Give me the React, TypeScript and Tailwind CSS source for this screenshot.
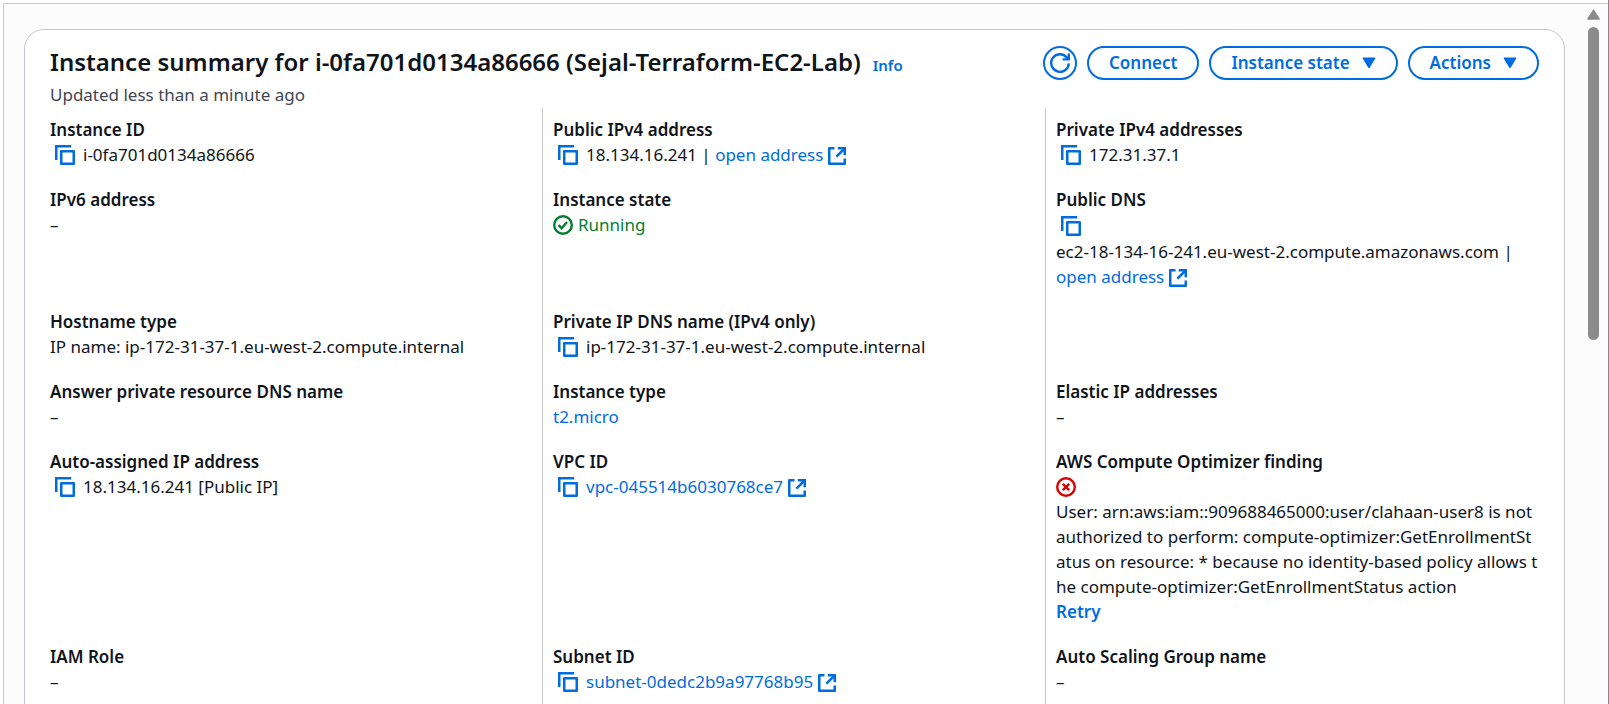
import type { ReactNode } from "react";

const link = "text-[#006ce0] hover:underline";

function CopyButton({ value }: { value: string }) {
  return (
    <button type="button" aria-label={`Copy ${value}`} className="ml-[5px] mr-2 inline-flex align-middle text-[#006ce0]">
      <svg width="20" height="20" viewBox="0 0 20 20" fill="none" stroke="currentColor" strokeWidth="2.5">
        <path d="M1.25 15V1.25H16.2" />
        <path d="M6.25 6.25h12.5v12.5H6.25z" strokeLinejoin="round" />
      </svg>
    </button>
  );
}

function ExternalIcon() {
  return (
    <svg aria-hidden="true" className="ml-[5px] inline-block align-middle" width="18" height="18" viewBox="0 0 18 18" fill="none" stroke="currentColor" strokeWidth="2.5">
      <path d="M6.5 1.25H1.25v15.5h15.5v-5.2" strokeLinejoin="round" />
      <path d="M9.8 1.25h6.95v6.9" />
      <path d="M16.4 1.6L8.4 9.6" />
    </svg>
  );
}

function ExternalLink({ children }: { children: ReactNode }) {
  return (
    <a href="#" className={link}>
      {children}
      <ExternalIcon />
    </a>
  );
}

function CheckCircle() {
  return (
    <svg aria-hidden="true" className="mr-[5px] inline-block align-middle" width="20" height="20" viewBox="0 0 20 20" fill="none" stroke="currentColor" strokeWidth="2.4">
      <circle cx="10" cy="10" r="8.8" />
      <path d="M5.6 10.2l3 3 5.4-6.2" />
    </svg>
  );
}

function ErrorCircle() {
  return (
    <svg aria-label="Error" className="block text-[#db0000]" width="20" height="20" viewBox="0 0 20 20" fill="none" stroke="currentColor" strokeWidth="2.4">
      <circle cx="10" cy="10" r="8.8" />
      <path d="M6.8 6.8l6.4 6.4M13.2 6.8l-6.4 6.4" />
    </svg>
  );
}

function Caret() {
  return (
    <svg aria-hidden="true" width="14" height="12" viewBox="0 0 14 12">
      <path d="M1.4 1.2h11.2L7 10.4z" fill="currentColor" stroke="currentColor" strokeWidth="1.6" strokeLinejoin="round" />
    </svg>
  );
}

function PillButton({ children, menu }: { children: ReactNode; menu?: boolean }) {
  return (
    <button
      type="button"
      aria-haspopup={menu ? "menu" : undefined}
      className="flex h-[34px] items-center gap-3 rounded-full border-2 border-[#006ce0] px-5 pb-px text-[17px] leading-[25px] font-semibold whitespace-nowrap text-[#006ce0]"
    >
      {children}
      {menu && <Caret />}
    </button>
  );
}

function Field({ label, children }: { label: string; children: ReactNode }) {
  return (
    <div className="border-l border-[#c6c6cd] pb-5 pl-[10px] nth-[3n+1]:border-transparent">
      <dt className="font-semibold">{label}</dt>
      <dd>{children}</dd>
    </div>
  );
}

const lineBox = "flex h-[25px] items-center whitespace-nowrap";

export default function App() {
  return (
    <div className="flex h-screen flex-col overflow-hidden border-r border-[#85858a] bg-white pt-[3px] pl-[3px] font-['Noto_Sans',sans-serif] text-[17px] leading-[25px] text-[#0f141a]">
      <div className="flex min-h-0 flex-1 border-t border-l border-[#c6c6cd] bg-[#fcfcfd]">
        <main className="min-w-0 flex-1 pt-[25px] pr-[21px] pl-5">
          <section className="rounded-[20px] border border-[#c6c6cd] bg-white pb-10">
            <header className="flex items-start justify-between px-[25px] pt-4">
              <div>
                <div className="flex items-baseline gap-3">
                  <h1 className="text-[24px] leading-8 font-semibold">
                    Instance summary for i-0fa701d0134a86666 (Sejal-Terraform-EC2-Lab)
                  </h1>
                  <a href="#" className="text-[15px] leading-5 font-semibold text-[#006ce0]">
                    Info
                  </a>
                </div>
                <p className="mt-1 text-[#424650]">Updated less than a minute ago</p>
              </div>
              <div className="flex gap-[10px]">
                <button
                  type="button"
                  aria-label="Refresh"
                  className="flex size-[34px] items-center justify-center rounded-full border-2 border-[#006ce0] text-[#006ce0]"
                >
                  <svg width="20" height="20" viewBox="0 0 20 20" fill="none" stroke="currentColor" strokeWidth="2.4">
                    <path d="M18.8 10.4A8.8 8.8 0 1 1 16.6 4.2L18.6 6.2" />
                    <path d="M18.8 0.4v6H12.6" />
                  </svg>
                </button>
                <PillButton>Connect</PillButton>
                <PillButton menu>Instance state</PillButton>
                <PillButton menu>Actions</PillButton>
              </div>
            </header>

            <dl className="mt-px mr-4 ml-[14px] grid grid-cols-3">
              <div className="h-[9px]" />
              <div className="h-[9px] border-l border-[#c6c6cd]" />
              <div className="h-[9px] border-l border-[#c6c6cd]" />

              <Field label="Instance ID">
                <div className={lineBox}>
                  <CopyButton value="instance ID" />
                  i-0fa701d0134a86666
                </div>
              </Field>
              <Field label="Public IPv4 address">
                <div className={lineBox}>
                  <CopyButton value="public IPv4 address" />
                  <span>
                    18.134.16.241 | <ExternalLink>open address</ExternalLink>
                  </span>
                </div>
              </Field>
              <Field label="Private IPv4 addresses">
                <div className={lineBox}>
                  <CopyButton value="private IPv4 address" />
                  172.31.37.1
                </div>
              </Field>

              <Field label="IPv6 address">–</Field>
              <Field label="Instance state">
                <div className={`${lineBox} text-[#00802f]`}>
                  <CheckCircle />
                  Running
                </div>
              </Field>
              <Field label="Public DNS">
                <div className="flex h-[27px] items-center">
                  <CopyButton value="public DNS" />
                </div>
                <div className={lineBox}>ec2-18-134-16-241.eu-west-2.compute.amazonaws.com |</div>
                <div className={lineBox}>
                  <ExternalLink>open address</ExternalLink>
                </div>
              </Field>

              <Field label="Hostname type">IP name: ip-172-31-37-1.eu-west-2.compute.internal</Field>
              <Field label="Private IP DNS name (IPv4 only)">
                <div className={lineBox}>
                  <CopyButton value="private IP DNS name" />
                  ip-172-31-37-1.eu-west-2.compute.internal
                </div>
              </Field>
              <div className="border-l border-[#c6c6cd]" />

              <Field label="Answer private resource DNS name">–</Field>
              <Field label="Instance type">
                <a href="#" className={link}>
                  t2.micro
                </a>
              </Field>
              <Field label="Elastic IP addresses">–</Field>

              <Field label="Auto-assigned IP address">
                <div className={lineBox}>
                  <CopyButton value="auto-assigned IP address" />
                  18.134.16.241 [Public IP]
                </div>
              </Field>
              <Field label="VPC ID">
                <div className={lineBox}>
                  <CopyButton value="VPC ID" />
                  <ExternalLink>vpc-045514b6030768ce7</ExternalLink>
                </div>
              </Field>
              <Field label="AWS Compute Optimizer finding">
                <div className={lineBox}>
                  <ErrorCircle />
                </div>
                <p className="whitespace-nowrap">
                  User: arn:aws:iam::909688465000:user/clahaan-user8 is not
                  <br />
                  authorized to perform: compute-optimizer:GetEnrollmentSt
                  <br />
                  atus on resource: * because no identity-based policy allows t
                  <br />
                  he compute-optimizer:GetEnrollmentStatus action
                </p>
                <button type="button" className="block font-semibold text-[#006ce0]">
                  Retry
                </button>
              </Field>

              <Field label="IAM Role">–</Field>
              <Field label="Subnet ID">
                <div className={lineBox}>
                  <CopyButton value="subnet ID" />
                  <ExternalLink>subnet-0dedc2b9a97768b95</ExternalLink>
                </div>
              </Field>
              <Field label="Auto Scaling Group name">–</Field>
            </dl>
          </section>
        </main>

        <div aria-hidden="true" className="flex w-[22px] flex-col items-center pt-[5px] pr-2">
          <svg width="13" height="11" viewBox="0 0 13 11" className="shrink-0">
            <path d="M6.5 1.4L12 10H1z" fill="#8b8b8b" stroke="#8b8b8b" strokeWidth="1.6" strokeLinejoin="round" />
          </svg>
          <div className="mt-[7px] h-[45%] w-[11px] rounded-full bg-[#8b8b8b]" />
        </div>
      </div>
    </div>
  );
}
